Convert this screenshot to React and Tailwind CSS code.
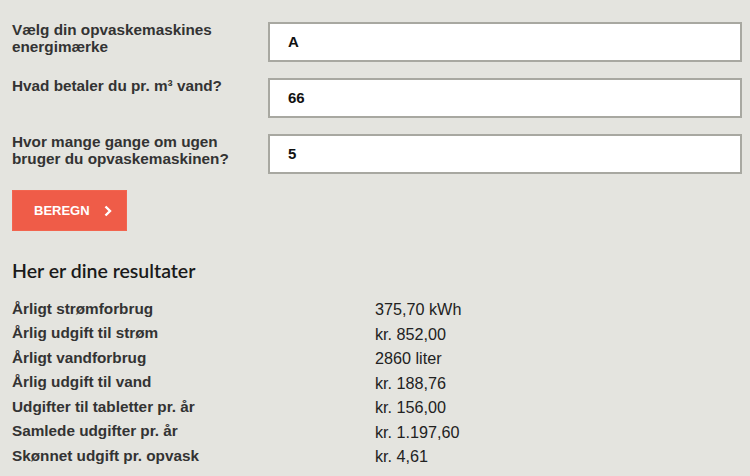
const fields = [
  { label: 'Vælg din opvaskemaskines energimærke', value: 'A' },
  { label: 'Hvad betaler du pr. m³ vand?', value: '66' },
  { label: 'Hvor mange gange om ugen bruger du opvaskemaskinen?', value: '5' },
]

const results = [
  ['Årligt strømforbrug', '375,70 kWh'],
  ['Årlig udgift til strøm', 'kr. 852,00'],
  ['Årligt vandforbrug', '2860 liter'],
  ['Årlig udgift til vand', 'kr. 188,76'],
  ['Udgifter til tabletter pr. år', 'kr. 156,00'],
  ['Samlede udgifter pr. år', 'kr. 1.197,60'],
  ['Skønnet udgift pr. opvask', 'kr. 4,61'],
]

export default function App() {
  return (
    <div className="min-h-[476px] w-[750px] bg-[#e4e4df] pl-3 pr-2 pt-[22px] font-['Liberation_Sans',Arial,sans-serif] text-[#333]">
      <div className="flex flex-col gap-4">
        {fields.map((f) => (
          <div key={f.label} className="flex">
            <div className="w-[256px] shrink-0 pr-4 text-[15.3px] font-bold leading-[17px] -mt-px">{f.label}</div>
            <div className="flex h-10 w-[474px] shrink-0 items-center border-2 border-[#a8a8a1] bg-white px-[18px] text-[15px] font-bold text-[#111]">
              {f.value}
            </div>
          </div>
        ))}
      </div>

      <button className="mt-[16px] flex h-[41px] w-[115px] items-center border border-[#f2654f] bg-[#ef5c48] pl-[21px] text-[13px] font-bold text-white">
        BEREGN
        <svg width="10" height="12" viewBox="0 0 10 12" className="ml-[13px]">
          <path d="M2.5 1.5 L7 6 L2.5 10.5" fill="none" stroke="white" strokeWidth="2.4" />
        </svg>
      </button>

      <h2 className="mt-[29px] font-['Lato',sans-serif] text-[19.5px] font-semibold leading-[22px] text-[#1a1a1a]">
        Her er dine resultater
      </h2>

      <div className="mt-[15px] flex flex-col">
        {results.map(([k, v]) => (
          <div key={k} className="flex h-[24.5px] items-center">
            <div className="w-[363px] text-[15.3px] font-bold text-[#333]">{k}</div>
            <div className="text-[16.2px] text-[#222]">{v}</div>
          </div>
        ))}
      </div>
    </div>
  )
}
